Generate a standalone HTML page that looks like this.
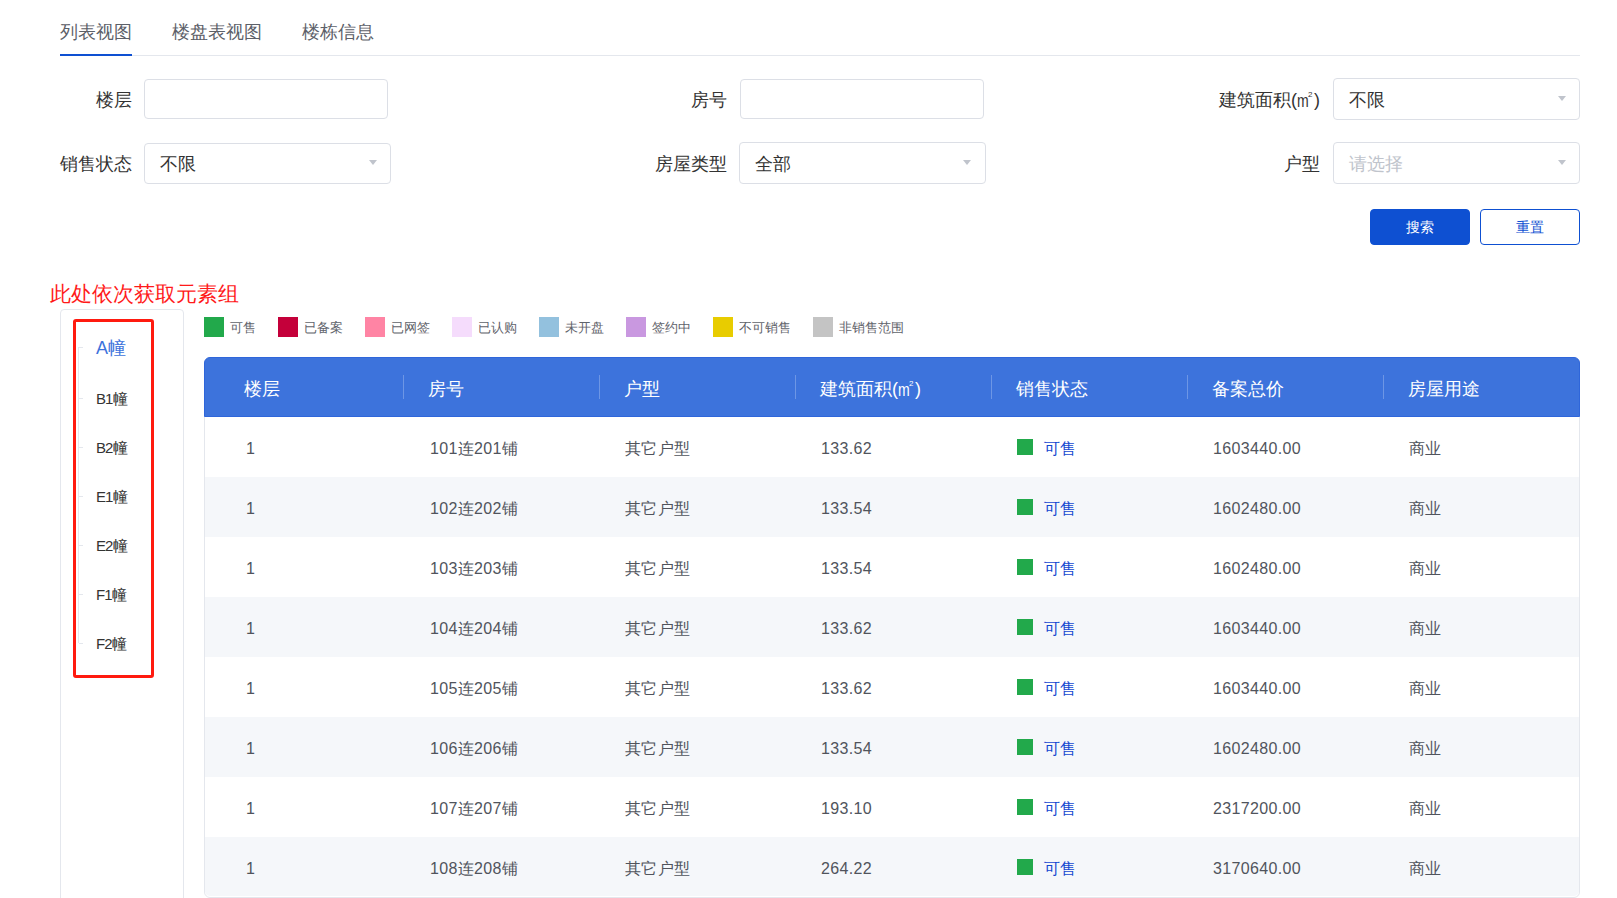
<!DOCTYPE html>
<html><head><meta charset="utf-8">
<style>
*{box-sizing:border-box;margin:0;padding:0}
html,body{width:1617px;height:898px;overflow:hidden;background:#fff}
body{position:relative;font-family:"Liberation Sans",sans-serif;color:#333}
.a{position:absolute;white-space:nowrap}
.tab{font-size:18px;color:#5c6068;line-height:18px}
.lbl{font-size:18px;color:#333;line-height:18px;text-align:right}
.inp{position:absolute;border:1px solid #dcdfe6;border-radius:4px;background:#fff}
.val{position:absolute;font-size:18px;line-height:18px;color:#333}
.ph{color:#c0c4cc}
.tri{position:absolute;width:0;height:0;border-left:4.5px solid transparent;border-right:4.5px solid transparent;border-top:5px solid #c0c4cc}
.btn{position:absolute;border-radius:4px;font-size:14px;line-height:34px;text-align:center}
.leg{position:absolute;top:317px;height:20px}
.sq{position:absolute;width:20px;height:20px;top:0}
.lt{position:absolute;white-space:nowrap;left:26px;top:4px;font-size:13px;line-height:13px;color:#5f636b}
.th{position:absolute;top:0;font-size:18px;line-height:18px;color:#fff}
.sep{position:absolute;top:305px;width:1px;height:0}
.row{position:absolute;left:205px;width:1374px;height:60px}
.cell{position:absolute;font-size:16px;line-height:16px;color:#50545c;letter-spacing:0.35px}
.m2{display:inline-block;position:relative;width:17px;height:10px}
.m2 b{position:absolute;left:0;bottom:-4px;font-weight:normal;display:block;transform:scaleX(0.78);transform-origin:0 0}
.m2 i{font-style:normal;font-size:8px;position:absolute;left:11px;top:-5px;line-height:8px}
</style></head><body>

<!-- tabs -->
<div class="a tab" style="left:60px;top:23px">列表视图</div>
<div class="a tab" style="left:172px;top:23px">楼盘表视图</div>
<div class="a tab" style="left:302px;top:23px">楼栋信息</div>
<div class="a" style="left:60px;top:55px;width:1520px;height:1px;background:#e4e7ed"></div>
<div class="a" style="left:60px;top:54px;width:72px;height:2px;background:#0e50d2"></div>

<!-- form row 1 -->
<div class="a lbl" style="right:1485px;top:91px">楼层</div>
<div class="inp" style="left:144px;top:79px;width:244px;height:40px"></div>
<div class="a lbl" style="right:890px;top:91px">房号</div>
<div class="inp" style="left:740px;top:79px;width:244px;height:40px"></div>
<div class="a lbl" style="right:297px;top:91px">建筑面积(<span class="m2"><b>m</b><i>2</i></span>)</div>
<div class="inp" style="left:1333px;top:78px;width:247px;height:42px"></div>
<div class="val" style="left:1349px;top:91px">不限</div>
<div class="tri" style="left:1558px;top:96px"></div>

<!-- form row 2 -->
<div class="a lbl" style="right:1485px;top:155px">销售状态</div>
<div class="inp" style="left:144px;top:143px;width:247px;height:41px"></div>
<div class="val" style="left:160px;top:155px">不限</div>
<div class="tri" style="left:369px;top:160px"></div>
<div class="a lbl" style="right:890px;top:155px">房屋类型</div>
<div class="inp" style="left:739px;top:142px;width:247px;height:42px"></div>
<div class="val" style="left:755px;top:155px">全部</div>
<div class="tri" style="left:963px;top:160px"></div>
<div class="a lbl" style="right:297px;top:155px">户型</div>
<div class="inp" style="left:1333px;top:142px;width:247px;height:42px"></div>
<div class="val ph" style="left:1349px;top:155px">请选择</div>
<div class="tri" style="left:1558px;top:160px"></div>

<!-- buttons -->
<div class="btn" style="left:1370px;top:209px;width:100px;height:36px;background:#0e50d2;color:#fff;border:1px solid #0e50d2">搜索</div>
<div class="btn" style="left:1480px;top:209px;width:100px;height:36px;background:#fff;color:#0e50d2;border:1px solid #0e50d2">重置</div>

<!-- annotation -->
<div class="a" style="left:50px;top:283px;font-size:21px;line-height:21px;color:#ff1a1a">此处依次获取元素组</div>

<!-- left panel -->
<div class="a" style="left:60px;top:309px;width:124px;height:600px;border:1px solid #e4e7ed;border-radius:4px"></div>
<div class="a" style="left:78px;top:347px;width:1px;height:296px;background:#e4e7ed"></div>
<div id="tree">
<div class="a" style="left:79px;top:347px;width:4px;height:1px;background:#e4e7ed"></div>
<div class="a" style="left:96px;top:339px;font-size:18px;line-height:18px;color:#3d73dc">A幢</div>
<div class="a" style="left:79px;top:398px;width:4px;height:1px;background:#e4e7ed"></div>
<div class="a" style="left:96px;top:391px;font-size:15px;line-height:15px;color:#333"><span style="letter-spacing:-0.9px">B1</span><span style="font-size:14.5px;margin-left:0.5px">幢</span></div>
<div class="a" style="left:79px;top:447px;width:4px;height:1px;background:#e4e7ed"></div>
<div class="a" style="left:96px;top:440px;font-size:15px;line-height:15px;color:#333"><span style="letter-spacing:-0.9px">B2</span><span style="font-size:14.5px;margin-left:0.5px">幢</span></div>
<div class="a" style="left:79px;top:496px;width:4px;height:1px;background:#e4e7ed"></div>
<div class="a" style="left:96px;top:489px;font-size:15px;line-height:15px;color:#333"><span style="letter-spacing:-0.9px">E1</span><span style="font-size:14.5px;margin-left:0.5px">幢</span></div>
<div class="a" style="left:79px;top:545px;width:4px;height:1px;background:#e4e7ed"></div>
<div class="a" style="left:96px;top:538px;font-size:15px;line-height:15px;color:#333"><span style="letter-spacing:-0.9px">E2</span><span style="font-size:14.5px;margin-left:0.5px">幢</span></div>
<div class="a" style="left:79px;top:594px;width:4px;height:1px;background:#e4e7ed"></div>
<div class="a" style="left:96px;top:587px;font-size:15px;line-height:15px;color:#333"><span style="letter-spacing:-0.9px">F1</span><span style="font-size:14.5px;margin-left:0.5px">幢</span></div>
<div class="a" style="left:79px;top:643px;width:4px;height:1px;background:#e4e7ed"></div>
<div class="a" style="left:96px;top:636px;font-size:15px;line-height:15px;color:#333"><span style="letter-spacing:-0.9px">F2</span><span style="font-size:14.5px;margin-left:0.5px">幢</span></div>
</div><!--/tree-->
<div class="a" style="left:73px;top:319px;width:81px;height:359px;border:3px solid #ff1a0f;border-radius:3px"></div>

<!-- legend -->
<div class="leg" style="left:204px"><div class="sq" style="background:#22a94b"></div><div class="lt">可售</div></div>
<div class="leg" style="left:278px"><div class="sq" style="background:#c4003a"></div><div class="lt">已备案</div></div>
<div class="leg" style="left:365px"><div class="sq" style="background:#ff84a4"></div><div class="lt">已网签</div></div>
<div class="leg" style="left:452px"><div class="sq" style="background:#f5dcfc"></div><div class="lt">已认购</div></div>
<div class="leg" style="left:539px"><div class="sq" style="background:#93c1de"></div><div class="lt">未开盘</div></div>
<div class="leg" style="left:626px"><div class="sq" style="background:#c998e0"></div><div class="lt">签约中</div></div>
<div class="leg" style="left:713px"><div class="sq" style="background:#e8cc00"></div><div class="lt">不可销售</div></div>
<div class="leg" style="left:813px"><div class="sq" style="background:#c4c4c4"></div><div class="lt">非销售范围</div></div>

<!-- table -->
<div class="a" style="left:204px;top:357px;width:1376px;height:541px;border:1px solid #e4e7ed;border-radius:6px"></div>
<div class="a" style="left:204px;top:357px;width:1376px;height:60px;background:#3d73dc;border:1px solid #2f66da;border-bottom-color:#2f66da;border-radius:6px 6px 0 0"></div>
<div id="tbl">
<div class="a th" style="left:244px;top:380px">楼层</div>
<div class="a th" style="left:428px;top:380px">房号</div>
<div class="a th" style="left:624px;top:380px">户型</div>
<div class="a th" style="left:820px;top:380px">建筑面积(<span class='m2'><b>m</b><i>2</i></span>)</div>
<div class="a th" style="left:1016px;top:380px">销售状态</div>
<div class="a th" style="left:1212px;top:380px">备案总价</div>
<div class="a th" style="left:1408px;top:380px">房屋用途</div>
<div class="a" style="left:403px;top:375px;width:1px;height:24px;background:rgba(255,255,255,0.25)"></div>
<div class="a" style="left:599px;top:375px;width:1px;height:24px;background:rgba(255,255,255,0.25)"></div>
<div class="a" style="left:795px;top:375px;width:1px;height:24px;background:rgba(255,255,255,0.25)"></div>
<div class="a" style="left:991px;top:375px;width:1px;height:24px;background:rgba(255,255,255,0.25)"></div>
<div class="a" style="left:1187px;top:375px;width:1px;height:24px;background:rgba(255,255,255,0.25)"></div>
<div class="a" style="left:1383px;top:375px;width:1px;height:24px;background:rgba(255,255,255,0.25)"></div>
<div class="row" style="top:417px;background:#fff;"></div>
<div class="a cell" style="left:246px;top:441px">1</div>
<div class="a cell" style="left:430px;top:441px">101连201铺</div>
<div class="a cell" style="left:625px;top:441px">其它户型</div>
<div class="a cell" style="left:821px;top:441px">133.62</div>
<div class="a" style="left:1017px;top:439px;width:16px;height:16px;background:#22a94b"></div>
<div class="a cell" style="left:1044px;top:441px;color:#1448d0">可售</div>
<div class="a cell" style="left:1213px;top:441px">1603440.00</div>
<div class="a cell" style="left:1409px;top:441px">商业</div>
<div class="row" style="top:477px;background:#f5f7fa;"></div>
<div class="a cell" style="left:246px;top:501px">1</div>
<div class="a cell" style="left:430px;top:501px">102连202铺</div>
<div class="a cell" style="left:625px;top:501px">其它户型</div>
<div class="a cell" style="left:821px;top:501px">133.54</div>
<div class="a" style="left:1017px;top:499px;width:16px;height:16px;background:#22a94b"></div>
<div class="a cell" style="left:1044px;top:501px;color:#1448d0">可售</div>
<div class="a cell" style="left:1213px;top:501px">1602480.00</div>
<div class="a cell" style="left:1409px;top:501px">商业</div>
<div class="row" style="top:537px;background:#fff;"></div>
<div class="a cell" style="left:246px;top:561px">1</div>
<div class="a cell" style="left:430px;top:561px">103连203铺</div>
<div class="a cell" style="left:625px;top:561px">其它户型</div>
<div class="a cell" style="left:821px;top:561px">133.54</div>
<div class="a" style="left:1017px;top:559px;width:16px;height:16px;background:#22a94b"></div>
<div class="a cell" style="left:1044px;top:561px;color:#1448d0">可售</div>
<div class="a cell" style="left:1213px;top:561px">1602480.00</div>
<div class="a cell" style="left:1409px;top:561px">商业</div>
<div class="row" style="top:597px;background:#f5f7fa;"></div>
<div class="a cell" style="left:246px;top:621px">1</div>
<div class="a cell" style="left:430px;top:621px">104连204铺</div>
<div class="a cell" style="left:625px;top:621px">其它户型</div>
<div class="a cell" style="left:821px;top:621px">133.62</div>
<div class="a" style="left:1017px;top:619px;width:16px;height:16px;background:#22a94b"></div>
<div class="a cell" style="left:1044px;top:621px;color:#1448d0">可售</div>
<div class="a cell" style="left:1213px;top:621px">1603440.00</div>
<div class="a cell" style="left:1409px;top:621px">商业</div>
<div class="row" style="top:657px;background:#fff;"></div>
<div class="a cell" style="left:246px;top:681px">1</div>
<div class="a cell" style="left:430px;top:681px">105连205铺</div>
<div class="a cell" style="left:625px;top:681px">其它户型</div>
<div class="a cell" style="left:821px;top:681px">133.62</div>
<div class="a" style="left:1017px;top:679px;width:16px;height:16px;background:#22a94b"></div>
<div class="a cell" style="left:1044px;top:681px;color:#1448d0">可售</div>
<div class="a cell" style="left:1213px;top:681px">1603440.00</div>
<div class="a cell" style="left:1409px;top:681px">商业</div>
<div class="row" style="top:717px;background:#f5f7fa;"></div>
<div class="a cell" style="left:246px;top:741px">1</div>
<div class="a cell" style="left:430px;top:741px">106连206铺</div>
<div class="a cell" style="left:625px;top:741px">其它户型</div>
<div class="a cell" style="left:821px;top:741px">133.54</div>
<div class="a" style="left:1017px;top:739px;width:16px;height:16px;background:#22a94b"></div>
<div class="a cell" style="left:1044px;top:741px;color:#1448d0">可售</div>
<div class="a cell" style="left:1213px;top:741px">1602480.00</div>
<div class="a cell" style="left:1409px;top:741px">商业</div>
<div class="row" style="top:777px;background:#fff;"></div>
<div class="a cell" style="left:246px;top:801px">1</div>
<div class="a cell" style="left:430px;top:801px">107连207铺</div>
<div class="a cell" style="left:625px;top:801px">其它户型</div>
<div class="a cell" style="left:821px;top:801px">193.10</div>
<div class="a" style="left:1017px;top:799px;width:16px;height:16px;background:#22a94b"></div>
<div class="a cell" style="left:1044px;top:801px;color:#1448d0">可售</div>
<div class="a cell" style="left:1213px;top:801px">2317200.00</div>
<div class="a cell" style="left:1409px;top:801px">商业</div>
<div class="row" style="top:837px;background:#f5f7fa;border-radius:0 0 5px 5px;height:59px;"></div>
<div class="a cell" style="left:246px;top:861px">1</div>
<div class="a cell" style="left:430px;top:861px">108连208铺</div>
<div class="a cell" style="left:625px;top:861px">其它户型</div>
<div class="a cell" style="left:821px;top:861px">264.22</div>
<div class="a" style="left:1017px;top:859px;width:16px;height:16px;background:#22a94b"></div>
<div class="a cell" style="left:1044px;top:861px;color:#1448d0">可售</div>
<div class="a cell" style="left:1213px;top:861px">3170640.00</div>
<div class="a cell" style="left:1409px;top:861px">商业</div>
</div><!--/tbl-->

</body></html>
